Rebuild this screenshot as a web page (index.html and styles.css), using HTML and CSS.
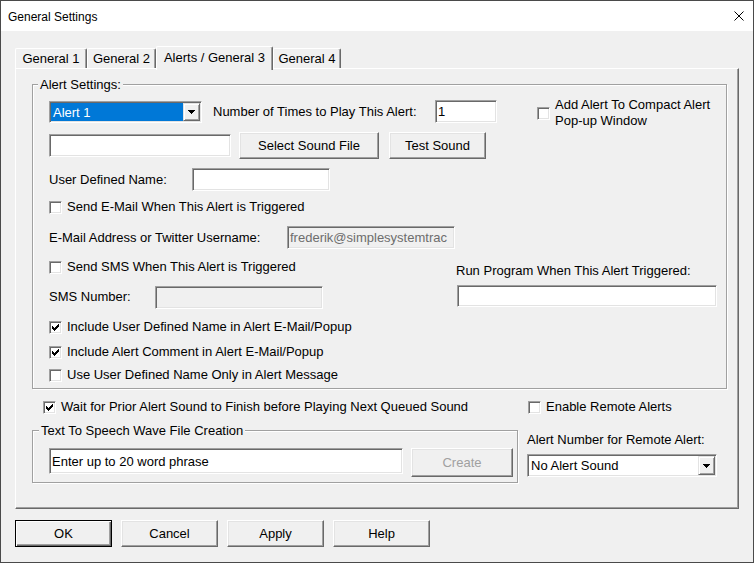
FILE: index.html
```html
<!DOCTYPE html>
<html>
<head>
<meta charset="utf-8">
<title>General Settings</title>
<link rel="stylesheet" href="styles.css">
</head>
<body>
<div class="window">
  <div class="titlebar">
    <span class="title">General Settings</span>
    <svg class="close" width="10" height="10" viewBox="0 0 10 10"><path d="M0.5 0.5 L9.5 9.5 M9.5 0.5 L0.5 9.5" stroke="#000" stroke-width="1" fill="none"/></svg>
  </div>
  <div class="content">
    <div class="tabs">
      <div class="tab t1">General 1</div>
      <div class="tab t2">General 2</div>
      <div class="tab active t3">Alerts / General 3</div>
      <div class="tab t4">General 4</div>
    </div>
    <div class="panel">
      <div class="group alert-group">
        <span class="group-title">Alert Settings:</span>

        <div class="row r1">
          <div class="combo combo-alert">
            <div class="combo-text selected">Alert 1</div>
            <div class="combo-btn"><svg width="7" height="4" viewBox="0 0 7 4" shape-rendering="crispEdges"><path d="M0 0H7V1H6V2H5V3H4V4H3V3H2V2H1V1H0Z" fill="#000"/></svg></div>
          </div>
          <span class="lbl lbl-times">Number of Times to Play This Alert:</span>
          <div class="field num">1</div>
          <div class="cb-item cb-compact">
            <span class="box"></span>
            <span class="cb-text two">Add Alert To Compact Alert<br>Pop-up Window</span>
          </div>
        </div>

        <div class="row r2">
          <div class="field sound-file"></div>
          <div class="btn btn-select">Select Sound File</div>
          <div class="btn btn-test">Test Sound</div>
        </div>

        <div class="row r3">
          <span class="lbl lbl-udn">User Defined Name:</span>
          <div class="field udn"></div>
        </div>

        <div class="row r4">
          <div class="cb-item">
            <span class="box"></span>
            <span class="cb-text">Send E-Mail When This Alert is Triggered</span>
          </div>
        </div>

        <div class="row r5">
          <span class="lbl lbl-email">E-Mail Address or Twitter Username:</span>
          <div class="field disabled email">frederik@simplesystemtrac</div>
        </div>

        <div class="row r6">
          <div class="cb-item">
            <span class="box"></span>
            <span class="cb-text">Send SMS When This Alert is Triggered</span>
          </div>
          <span class="lbl lbl-run">Run Program When This Alert Triggered:</span>
        </div>

        <div class="row r7">
          <span class="lbl lbl-sms">SMS Number:</span>
          <div class="field disabled sms"></div>
          <div class="field run"></div>
        </div>

        <div class="row r8">
          <div class="cb-item">
            <span class="box"><svg width="7" height="7" viewBox="0 0 7 7" shape-rendering="crispEdges"><path d="M0 2H1V3H2V4H3V3H4V2H5V1H6V0H7V3H6V4H5V5H4V6H3V7H2V6H1V5H0Z" fill="#000"/></svg></span>
            <span class="cb-text">Include User Defined Name in Alert E-Mail/Popup</span>
          </div>
        </div>

        <div class="row r9">
          <div class="cb-item">
            <span class="box"><svg width="7" height="7" viewBox="0 0 7 7" shape-rendering="crispEdges"><path d="M0 2H1V3H2V4H3V3H4V2H5V1H6V0H7V3H6V4H5V5H4V6H3V7H2V6H1V5H0Z" fill="#000"/></svg></span>
            <span class="cb-text">Include Alert Comment in Alert E-Mail/Popup</span>
          </div>
        </div>

        <div class="row r10">
          <div class="cb-item">
            <span class="box"></span>
            <span class="cb-text">Use User Defined Name Only in Alert Message</span>
          </div>
        </div>
      </div>

      <div class="row row-a">
        <div class="cb-item cb-wait">
          <span class="box"><svg width="7" height="7" viewBox="0 0 7 7" shape-rendering="crispEdges"><path d="M0 2H1V3H2V4H3V3H4V2H5V1H6V0H7V3H6V4H5V5H4V6H3V7H2V6H1V5H0Z" fill="#000"/></svg></span>
          <span class="cb-text">Wait for Prior Alert Sound to Finish before Playing Next Queued Sound</span>
        </div>
        <div class="cb-item">
          <span class="box"></span>
          <span class="cb-text">Enable Remote Alerts</span>
        </div>
      </div>

      <div class="row-b">
        <div class="group tts-group">
          <span class="group-title">Text To Speech Wave File Creation</span>
          <div class="field tts-input">Enter up to 20 word phrase</div>
          <div class="btn disabled btn-create">Create</div>
        </div>
        <div class="remote">
          <span class="lbl lbl-remote">Alert Number for Remote Alert:</span>
          <div class="combo combo-remote">
            <div class="combo-text">No Alert Sound</div>
            <div class="combo-btn"><svg width="7" height="4" viewBox="0 0 7 4" shape-rendering="crispEdges"><path d="M0 0H7V1H6V2H5V3H4V4H3V3H2V2H1V1H0Z" fill="#000"/></svg></div>
          </div>
        </div>
      </div>
    </div>

    <div class="buttons">
      <div class="btn default dlg-btn">OK</div>
      <div class="btn dlg-btn">Cancel</div>
      <div class="btn dlg-btn">Apply</div>
      <div class="btn dlg-btn">Help</div>
    </div>
  </div>
</div>
</body>
</html>
```
FILE: styles.css
```css
* { box-sizing: border-box; }

body {
  margin: 0;
  font-family: "Liberation Sans", Arial, sans-serif;
  font-size: 13px;
  color: #000;
  background: #f0f0f0;
}

.window {
  width: 754px;
  height: 563px;
  border: 1px solid #4a4a4a;
  background: #f0f0f0;
  overflow: hidden;
}

.titlebar {
  height: 30px;
  background: #fff;
  display: flex;
  align-items: center;
  justify-content: space-between;
  padding: 0 9px 0 7px;
  font-size: 12px;
}
.title { line-height: 14px; margin-top: 1px; }
.close { display: block; }

.content { padding: 15px 0 0 14px; }

/* tabs */
.tabs {
  display: flex;
  align-items: flex-end;
  height: 22px;
}
.tab {
  height: 20px;
  border-top: 1px solid #fff;
  border-left: 1px solid #fff;
  border-right: 1px solid #696969;
  box-shadow: inset -1px 0 0 #a0a0a0;
  border-radius: 2px 2px 0 0;
  text-align: center;
  padding-top: 2px;
  line-height: 15px;
  white-space: nowrap;
  background: #f0f0f0;
}
.t1 { width: 72px; }
.t2 { width: 69px; }
.t3 { width: 117px; }
.t4 { width: 68px; }
.tab.active {
  height: 24px;
  margin-bottom: -2px;
  position: relative;
  z-index: 1;
  padding-top: 3px;
}

/* tab page */
.panel {
  width: 724px;
  height: 441px;
  border: 1px solid;
  border-color: #fff #696969 #696969 #fff;
  box-shadow: inset -1px -1px 0 #a0a0a0;
  padding: 15px 0 0 16px;
}

.group {
  position: relative;
  border: 1px solid #a0a0a0;
  box-shadow: inset 1px 1px 0 #fff, 1px 1px 0 #fff;
}
.group-title {
  position: absolute;
  top: -8px;
  left: 5px;
  padding: 0 2px;
  background: #f0f0f0;
  line-height: 15px;
  white-space: nowrap;
}

.alert-group {
  width: 695px;
  height: 305px;
  padding: 15px 0 0 16px;
  display: flex;
  flex-direction: column;
}

.row {
  display: flex;
  align-items: center;
  flex: none;
}
.lbl { line-height: 15px; white-space: nowrap; flex: none; }

/* controls */
.field {
  flex: none;
  border: 1px solid;
  border-color: #a0a0a0 #fff #fff #a0a0a0;
  box-shadow: inset 1px 1px 0 #696969, inset -1px -1px 0 #e3e3e3;
  background: #fff;
  padding: 0 2px;
  line-height: 15px;
  white-space: nowrap;
  overflow: hidden;
  display: flex;
  align-items: center;
}
.field.disabled { background: #f0f0f0; color: #6d6d6d; }

.btn {
  flex: none;
  height: 27px;
  border: 1px solid;
  border-color: #fff #696969 #696969 #fff;
  box-shadow: inset -1px -1px 0 #a0a0a0, inset 1px 1px 0 #e3e3e3;
  background: #f0f0f0;
  display: flex;
  align-items: center;
  justify-content: center;
  white-space: nowrap;
}
.btn.default {
  border-color: #000;
  box-shadow: inset 1px 1px 0 #fff, inset -1px -1px 0 #696969, inset -2px -2px 0 #a0a0a0;
}
.btn.disabled { color: #a0a0a0; }

.combo {
  flex: none;
  display: flex;
  border: 1px solid;
  border-color: #a0a0a0 #fff #fff #a0a0a0;
  box-shadow: inset 1px 1px 0 #696969, inset -1px -1px 0 #e3e3e3;
  background: #fff;
  padding: 1px;
}
.combo-text {
  flex: 1;
  display: flex;
  align-items: center;
  padding-left: 2px;
  white-space: nowrap;
  line-height: 15px;
}
.combo-text.selected { background: #0078d7; color: #fff; }
.combo-btn {
  width: 17px;
  flex: none;
  border: 1px solid;
  border-color: #e3e3e3 #696969 #696969 #e3e3e3;
  box-shadow: inset 1px 1px 0 #fff, inset -1px -1px 0 #a0a0a0;
  background: #f0f0f0;
  display: flex;
  align-items: center;
  justify-content: center;
}
.combo-btn svg { display: block; }

.cb-item { display: flex; align-items: center; flex: none; }
.box {
  width: 13px;
  height: 13px;
  flex: none;
  border: 1px solid;
  border-color: #a0a0a0 #fff #fff #a0a0a0;
  box-shadow: inset 1px 1px 0 #696969, inset -1px -1px 0 #e3e3e3;
  background: #fff;
  display: flex;
  align-items: center;
  justify-content: center;
  margin-right: 5px;
}
.box svg { display: block; }
.cb-text { line-height: 15px; white-space: nowrap; margin-bottom: 2px; }
.cb-text.two { line-height: 16px; margin-bottom: 0; }

/* alert settings rows */
.r1 { height: 23px; }
.combo-alert { width: 153px; height: 22px; align-self: flex-start; margin-top: 1px; }
.lbl-times { width: 222px; margin-left: 11px; }
.num { width: 62px; height: 23px; }
.cb-compact { margin-left: 40px; align-self: flex-start; margin-top: -3px; }

.r2 { height: 27px; margin-top: 9px; }
.sound-file { width: 182px; height: 23px; }
.btn-select { width: 140px; margin-left: 8px; }
.btn-test { width: 97px; margin-left: 10px; }

.r3 { height: 23px; margin-top: 9px; }
.lbl-udn { width: 143px; }
.udn { width: 138px; height: 23px; }

.r4 { height: 17px; margin-top: 8px; }

.r5 { height: 23px; margin-top: 10px; }
.lbl-email { width: 238px; }
.email { width: 168px; height: 23px; }

.r6 { height: 17px; margin-top: 10px; }
.lbl-run { margin-left: auto; width: 270px; align-self: flex-start; margin-top: 4px; }

.r7 { height: 24px; margin-top: 9px; align-items: flex-start; }
.lbl-sms { width: 106px; margin-top: 4px; }
.sms { width: 168px; height: 23px; margin-top: 1px; }
.run { width: 260px; height: 22px; margin-left: 134px; }

.r8 { height: 17px; margin-top: 10px; }
.r9 { height: 17px; margin-top: 8px; }
.r10 { height: 17px; margin-top: 6px; }

/* lower section */
.row-a { margin-top: 10px; height: 17px; padding-left: 11px; }
.cb-wait { width: 485px; }

.row-b { margin-top: 14px; display: flex; align-items: flex-start; }
.tts-group {
  width: 486px;
  height: 53px;
  padding: 17px 0 0 16px;
  display: flex;
  align-items: flex-start;
  flex: none;
}
.tts-group .group-title { left: 6px; }
.tts-input { width: 354px; height: 26px; }
.btn-create { width: 102px; height: 29px; margin-left: 8px; }

.remote {
  margin-left: 9px;
  padding-top: 2px;
  display: flex;
  flex-direction: column;
}
.lbl-remote { line-height: 16px; }
.combo-remote { width: 190px; height: 23px; margin-top: 6px; }

/* dialog buttons */
.buttons {
  display: flex;
  gap: 9px;
  margin-top: 11px;
}
.dlg-btn { width: 97px; height: 27px; }
```
